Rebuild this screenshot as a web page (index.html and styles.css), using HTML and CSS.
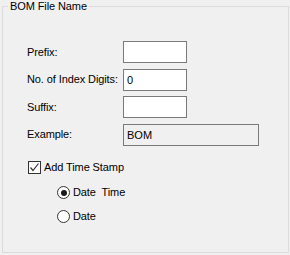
FILE: index.html
```html
<!DOCTYPE html>
<html lang="en">
<head>
    <meta charset="UTF-8">
    <title>BOM File Name</title>
    <link rel="stylesheet" href="styles.css">
</head>
<body>
    <!-- BOM file name group -->
    <fieldset class="group">
        <legend class="group-title">BOM File Name</legend>

        <div class="fields">
            <label class="field-label">Prefix:</label>
            <input type="text" class="text-box" value="">

            <label class="field-label">No. of Index Digits:</label>
            <input type="text" class="text-box" value="0">

            <label class="field-label">Suffix:</label>
            <input type="text" class="text-box" value="">

            <label class="field-label">Example:</label>
            <input type="text" class="text-box example" value="BOM" readonly>
        </div>

        <label class="check-row">
            <span class="check-box">
                <svg width="11" height="11" viewBox="0 0 11 11">
                    <path d="M1.5 5.5 L4 8.5 L9.5 1.5" fill="none" stroke="#333" stroke-width="1.2"/>
                </svg>
            </span>
            Add Time Stamp
        </label>

        <div class="radio-list">
            <label class="radio-row"><span class="radio on"></span>Date&nbsp; Time</label>
            <label class="radio-row"><span class="radio"></span>Date</label>
        </div>
    </fieldset>
</body>
</html>
```

FILE: styles.css
```css
* {
    margin: 0;
    padding: 0;
    box-sizing: border-box;
}

html, body {
    background: #f0f0f0;
}

body {
    font-family: 'Liberation Sans', Arial, sans-serif;
    font-size: 11px;
    letter-spacing: -0.1px;
    color: #000;
}

/* group box */
.group {
    margin: 0 1px 0 2px;
    width: 287px;
    height: 253px;
    border: 1px solid #dcdcdc;
    padding: 0;
}

.group-title {
    margin-left: 5px;
    padding: 0 2px;
    line-height: 12px;
}

/* label + text box rows */
.fields {
    display: grid;
    grid-template-columns: 96px auto;
    row-gap: 5.5px;
    align-items: center;
    margin-top: 29px;
    padding-left: 24px;
}

.field-label {
    line-height: 13px;
}

.text-box {
    width: 64px;
    height: 22px;
    border: 1px solid #7a7a7a;
    padding: 0 3px;
    background: #fff;
    font-family: inherit;
    font-size: 11px;
    color: #000;
    outline: none;
}

.text-box.example {
    width: 136px;
    background: #f0f0f0;
}

/* check box */
.check-row {
    display: flex;
    align-items: center;
    gap: 3px;
    margin-top: 15.5px;
    padding-left: 25px;
    line-height: 13px;
}

.check-box {
    display: flex;
    align-items: center;
    justify-content: center;
    width: 13px;
    height: 13px;
    border: 1px solid #333;
    background: #fff;
}

/* radio buttons */
.radio-list {
    display: flex;
    flex-direction: column;
    gap: 11px;
    margin-top: 12px;
    padding-left: 54px;
}

.radio-row {
    display: flex;
    align-items: center;
    gap: 3px;
    line-height: 13px;
}

.radio {
    position: relative;
    width: 13px;
    height: 13px;
    border: 1px solid #333;
    border-radius: 50%;
    background: #fff;
}

.radio.on::after {
    content: '';
    position: absolute;
    left: 2.5px;
    top: 2.5px;
    width: 6px;
    height: 6px;
    border-radius: 50%;
    background: #1a1a1a;
}
```
